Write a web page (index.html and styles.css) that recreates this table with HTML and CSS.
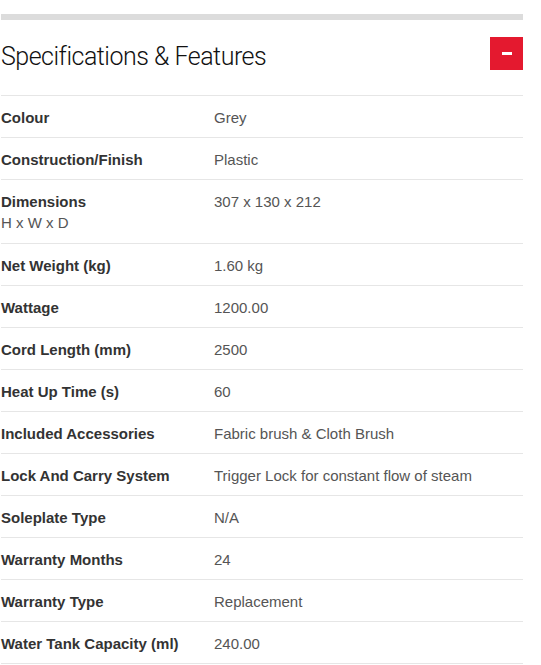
FILE: index.html
```html
<!DOCTYPE html>
<html>
<head>
<meta charset="utf-8">
<link rel="stylesheet" href="styles.css">
</head>
<body>
<div class="wrap">
  <div class="topbar"></div>
  <div class="header">
    <h2 class="title">Specifications &amp; Features</h2>
    <button class="toggle" aria-label="Collapse"><span class="minus"></span></button>
  </div>
  <table class="specs">
    <tr><td class="label">Colour</td><td class="value">Grey</td></tr>
    <tr><td class="label">Construction/Finish</td><td class="value">Plastic</td></tr>
    <tr><td class="label">Dimensions<span class="sub">H x W x D</span></td><td class="value">307 x 130 x 212</td></tr>
    <tr><td class="label">Net Weight (kg)</td><td class="value">1.60 kg</td></tr>
    <tr><td class="label">Wattage</td><td class="value">1200.00</td></tr>
    <tr><td class="label">Cord Length (mm)</td><td class="value">2500</td></tr>
    <tr><td class="label">Heat Up Time (s)</td><td class="value">60</td></tr>
    <tr><td class="label">Included Accessories</td><td class="value">Fabric brush &amp; Cloth Brush</td></tr>
    <tr><td class="label">Lock And Carry System</td><td class="value">Trigger Lock for constant flow of steam</td></tr>
    <tr><td class="label">Soleplate Type</td><td class="value">N/A</td></tr>
    <tr><td class="label">Warranty Months</td><td class="value">24</td></tr>
    <tr><td class="label">Warranty Type</td><td class="value">Replacement</td></tr>
    <tr><td class="label">Water Tank Capacity (ml)</td><td class="value">240.00</td></tr>
  </table>
</div>
</body>
</html>
```
FILE: styles.css
```css
html, body {
  margin: 0;
  padding: 0;
  background: #fff;
}
.wrap {
  width: 522px;
  margin-left: 1px;
  font-family: "Liberation Sans", Arial, sans-serif;
}
.topbar {
  margin-top: 14px;
  height: 6px;
  background: #dcdcdc;
}
.header {
  display: flex;
  justify-content: space-between;
  align-items: flex-start;
  padding-top: 17px;
  height: 58px;
  border-bottom: 1px solid #e6e6e6;
}
.title {
  margin: 3px 0 0 0;
  font-family: Roboto, "Liberation Sans", sans-serif;
  font-weight: 300;
  font-size: 25px;
  letter-spacing: -0.5px;
  line-height: 33px;
  color: #111;
}
.toggle {
  width: 33px;
  height: 33px;
  border: 0;
  padding: 0;
  background: #e4192f;
  display: flex;
  align-items: center;
  justify-content: center;
}
.minus {
  display: block;
  width: 10px;
  height: 3px;
  background: #fff;
}
.specs {
  width: 100%;
  border-collapse: collapse;
  font-size: 15px;
  line-height: 21px;
}
.specs td {
  padding: 11px 0 9px;
  border-bottom: 1px solid #e6e6e6;
  vertical-align: top;
}
.label {
  width: 213px;
  font-weight: bold;
  color: #333;
}
.sub {
  display: block;
  font-weight: normal;
  color: #555;
  line-height: 22px;
}
.value {
  color: #555;
}
```
